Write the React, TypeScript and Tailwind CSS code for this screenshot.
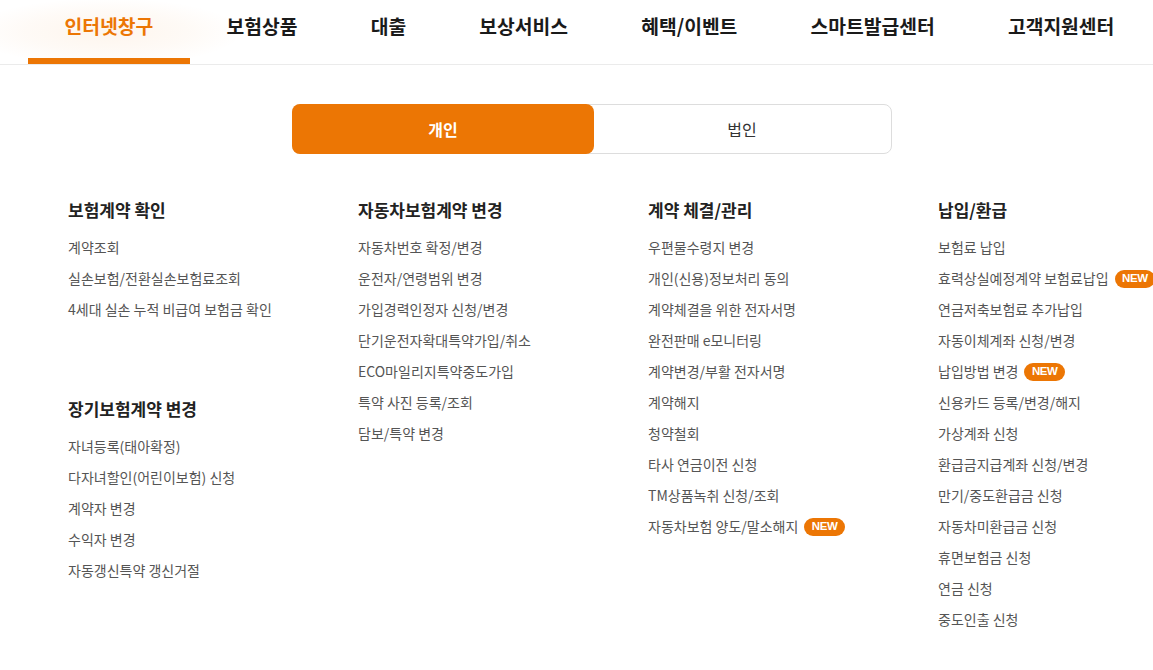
const tabs = ['인터넷창구', '보험상품', '대출', '보상서비스', '혜택/이벤트', '스마트발급센터', '고객지원센터']

type Item = { label: string; isNew?: boolean }
type Section = { title: string; items: Item[] }

const columns: Section[][] = [
  [
    {
      title: '보험계약 확인',
      items: [{ label: '계약조회' }, { label: '실손보험/전환실손보험료조회' }, { label: '4세대 실손 누적 비급여 보험금 확인' }],
    },
    {
      title: '장기보험계약 변경',
      items: [
        { label: '자녀등록(태아확정)' },
        { label: '다자녀할인(어린이보험) 신청' },
        { label: '계약자 변경' },
        { label: '수익자 변경' },
        { label: '자동갱신특약 갱신거절' },
      ],
    },
  ],
  [
    {
      title: '자동차보험계약 변경',
      items: [
        { label: '자동차번호 확정/변경' },
        { label: '운전자/연령범위 변경' },
        { label: '가입경력인정자 신청/변경' },
        { label: '단기운전자확대특약가입/취소' },
        { label: 'ECO마일리지특약중도가입' },
        { label: '특약 사진 등록/조회' },
        { label: '담보/특약 변경' },
      ],
    },
  ],
  [
    {
      title: '계약 체결/관리',
      items: [
        { label: '우편물수령지 변경' },
        { label: '개인(신용)정보처리 동의' },
        { label: '계약체결을 위한 전자서명' },
        { label: '완전판매 e모니터링' },
        { label: '계약변경/부활 전자서명' },
        { label: '계약해지' },
        { label: '청약철회' },
        { label: '타사 연금이전 신청' },
        { label: 'TM상품녹취 신청/조회' },
        { label: '자동차보험 양도/말소해지', isNew: true },
      ],
    },
  ],
  [
    {
      title: '납입/환급',
      items: [
        { label: '보험료 납입' },
        { label: '효력상실예정계약 보험료납입', isNew: true },
        { label: '연금저축보험료 추가납입' },
        { label: '자동이체계좌 신청/변경' },
        { label: '납입방법 변경', isNew: true },
        { label: '신용카드 등록/변경/해지' },
        { label: '가상계좌 신청' },
        { label: '환급금지급계좌 신청/변경' },
        { label: '만기/중도환급금 신청' },
        { label: '자동차미환급금 신청' },
        { label: '휴면보험금 신청' },
        { label: '연금 신청' },
        { label: '중도인출 신청' },
      ],
    },
  ],
]

function NewBadge() {
  return (
    <span className="ml-[6px] inline-flex h-[18px] items-center rounded-full bg-[#ec7604] px-[7.5px] font-['Liberation_Sans',sans-serif] text-[11.5px] font-bold leading-none tracking-[-0.4px] text-white">
      NEW
    </span>
  )
}

export default function App() {
  return (
    <div className="min-h-[670px] w-[1153px] overflow-hidden bg-white font-['Noto_Sans_CJK_KR','Noto_Sans',sans-serif]">
      <nav className="flex h-[65px] border-b border-[#ebebeb] pl-[28px]">
        {tabs.map((t, i) => (
          <div key={t} className="relative flex h-[64px] items-start px-[36.6px] pt-[13px]">
            {i === 0 && (
              <span className="absolute -left-[50px] -right-[45px] top-0 bottom-0 bg-[radial-gradient(ellipse_at_center,rgba(236,118,4,0.07),rgba(236,118,4,0.035)_45%,transparent_75%)]" />
            )}
            <span
              className={`relative whitespace-nowrap text-[19.3px] font-bold leading-[26px] ${
                i === 0 ? 'text-[#ec7604]' : 'text-[#1a1a1a]'
              }`}
            >
              {t}
            </span>
            {i === 0 && <span className="absolute bottom-0 left-0 right-0 h-[6px] bg-[#ec7604]" />}
          </div>
        ))}
      </nav>

      <div className="ml-[292px] mt-[39px] flex h-[50px] w-[600px] rounded-lg border border-[#dddddd]">
        <button className="-m-px flex w-[302px] items-center justify-center rounded-lg bg-[#ec7604] text-[16px] font-bold text-white">
          개인
        </button>
        <button className="flex flex-1 items-center justify-center text-[16px] text-[#333]">법인</button>
      </div>

      <div className="mt-[44px] grid grid-cols-[290px_290px_290px_290px] pl-[68px]">
        {columns.map((sections, ci) => (
          <div key={ci} className="flex flex-col">
            {sections.map((s, si) => (
              <div key={s.title} className={si > 0 ? 'mt-[72px]' : ''}>
                <h3 className="whitespace-nowrap text-[17px] font-bold leading-[24px] text-[#222]">{s.title}</h3>
                <ul className="mt-[10px]">
                  {s.items.map((it) => (
                    <li
                      key={it.label}
                      className="flex h-[31px] items-center whitespace-nowrap text-[14px] text-[#555]"
                    >
                      {it.label}
                      {it.isNew && <NewBadge />}
                    </li>
                  ))}
                </ul>
              </div>
            ))}
          </div>
        ))}
      </div>
    </div>
  )
}
